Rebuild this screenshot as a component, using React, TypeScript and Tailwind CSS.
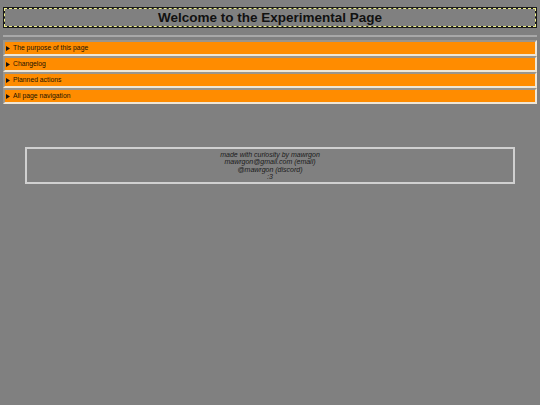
const sections = ['The purpose of this page', 'Changelog', 'Planned actions', 'All page navigation'];

const footerLines = ['made with curiosity by mawrgon', 'mawrgon@gmail.com (email)', '@mawrgon (discord)', ':3'];

export default function App() {
  return (
    <div className="min-h-screen w-full bg-[#808080] px-[3px] pt-[7px] font-['Liberation_Sans',Arial,sans-serif] text-black">
      {/* title box */}
      <div className="bg-[#1a1a1a] p-px">
        <div className="flex h-[19px] items-center justify-center border-[1.5px] border-dashed border-[#f0f08c] bg-[#808080] bg-clip-padding">
          <h1 className="text-[13.5px] leading-none font-bold text-[#111]">Welcome to the Experimental Page</h1>
        </div>
      </div>

      <hr className="mt-[7px] border-t-2 border-[#a8a8a8]" />

      <div className="mt-[3px] flex flex-col">
        {sections.map((s) => (
          <details key={s} className="border-2 border-[#efe6d6] bg-[#ff8c00] [border-style:inset]">
            <summary className="flex h-[12px] cursor-pointer list-none items-center gap-[3px] pl-[1px] text-[6.8px] leading-none text-[#1a1200] [&::-webkit-details-marker]:hidden">
              <svg width="4" height="5" viewBox="0 0 4 5" className="shrink-0">
                <path d="M0 0 L4 2.5 L0 5 Z" fill="#111" />
              </svg>
              <span>{s}</span>
            </summary>
          </details>
        ))}
      </div>

      <div className="mx-[22px] mt-[43px] flex h-[37px] flex-col items-center justify-center border-2 border-[#d0d0d0] text-[7px] leading-[7.5px] text-[#1a1a1a] italic">
        {footerLines.map((l) => (
          <p key={l}>{l}</p>
        ))}
      </div>
    </div>
  );
}
